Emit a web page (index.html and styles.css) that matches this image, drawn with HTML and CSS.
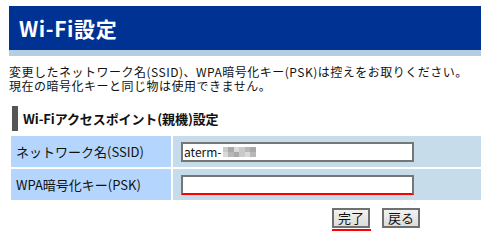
FILE: index.html
```html
<!DOCTYPE html>
<html lang="ja">
<head>
<meta charset="utf-8">
<title>Wi-Fi設定</title>
<link rel="stylesheet" href="styles.css">
</head>
<body>
<div class="page">
  <div class="header"><h1 class="title">Wi-Fi設定</h1></div>
  <div class="note">
    <p class="note-line">変更したネットワーク名(SSID)、WPA暗号化キー(PSK)は控えをお取りください。</p>
    <p class="note-line">現在の暗号化キーと同じ物は使用できません。</p>
  </div>
  <h2 class="section">Wi-Fiアクセスポイント(親機)設定</h2>
  <table class="form">
    <tr>
      <th class="label">ネットワーク名(SSID)</th>
      <td class="value"><div class="field"><span class="val">aterm-</span><span class="mosaic"><i class="m1"></i><i class="m2"></i><i class="m3"></i><i class="m1"></i><i class="m4"></i><i class="m2"></i><i class="m3"></i><i class="m4"></i><i class="m2"></i><i class="m1"></i><i class="m3"></i><i class="m4"></i></span></div></td>
    </tr>
    <tr>
      <th class="label">WPA暗号化キー(PSK)</th>
      <td class="value"><div class="field field-error"></div></td>
    </tr>
  </table>
  <div class="buttons">
    <span class="focus-mark"><button class="btn">完了</button></span>
    <button class="btn">戻る</button>
  </div>
</div>
</body>
</html>
```
FILE: styles.css
```css
html { overflow: hidden; }
body {
  margin: 0;
  padding: 6px 0 0 9px;
  font-family: "Noto Sans CJK JP", "DejaVu Sans", sans-serif;
  color: #111;
  background: #fff;
}
.page { width: 476px; }
.header {
  background: #003293;
  height: 44px;
  border-bottom: 6px solid #b5cde0;
  display: flex;
  align-items: center;
  padding-left: 10px;
}
.title {
  margin: 0;
  color: #fff;
  font-size: 21px;
  font-weight: bold;
  line-height: 24px;
  letter-spacing: 0.6px;
}
.note {
  margin: 9px 0 0 0;
  font-size: 12px;
  letter-spacing: 0.5px;
}
.note-line {
  margin: 0;
  height: 14px;
  line-height: 14px;
  white-space: nowrap;
}
.section {
  margin: 13px 0 0 3px;
  border-left: 6px solid #555;
  height: 25px;
  display: flex;
  align-items: center;
  padding-left: 5px;
  font-size: 13px;
  font-weight: bold;
  letter-spacing: -0.1px;
}
.form {
  margin-top: 3px;
  border-spacing: 2px;
  width: 476px;
}
.form tr { height: 31px; }
.label {
  width: 155px;
  background: #b4d5fd;
  text-align: left;
  font-weight: normal;
  font-size: 13px;
  padding: 0 0 0 5px;
}
.value {
  background: #c6dcea;
  padding: 0 0 0 8px;
}
.field {
  box-sizing: border-box;
  width: 233px;
  height: 20px;
  border: 2px solid #767676;
  background: #fff;
  display: flex;
  align-items: center;
  padding-left: 1px;
  font-size: 12px;
}
.field-error { border-bottom-color: #f00; }
.mosaic { display: inline-flex; flex-wrap: wrap; width: 33px; height: 10px; margin-left: 1px; }
.mosaic i { width: 5.5px; height: 5px; display: block; }
.m1 { background: #c9c9c9; }
.m2 { background: #a9a9a9; }
.m3 { background: #d9d9d9; }
.m4 { background: #b7b7b7; }
.buttons {
  margin-top: 6px;
  padding-left: 323px;
  display: flex;
  align-items: flex-start;
  gap: 11px;
}
.focus-mark {
  display: block;
  padding-bottom: 1px;
  border-bottom: 2px solid #f00;
  width: 39px;
}
.btn {
  display: block;
  height: 20px;
  padding: 0 4px;
  font-family: "Noto Sans CJK JP", sans-serif;
  font-size: 13px;
  line-height: 16px;
  color: #111;
  border: 2px solid #707070;
  background: linear-gradient(#f2f2f2, #dcdcdc);
  border-radius: 0;
}
```
